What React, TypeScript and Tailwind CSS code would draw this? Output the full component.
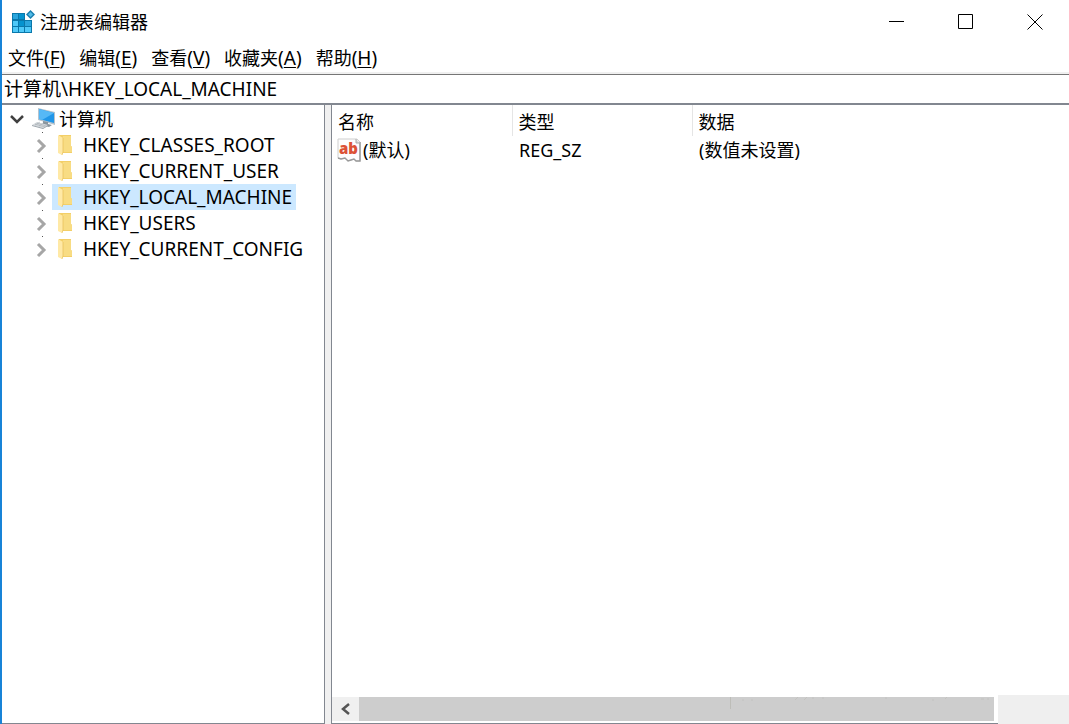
import { useState } from "react";
import type { ReactNode } from "react";

const menus = [
    { label: "文件", key: "F" },
    { label: "编辑", key: "E" },
    { label: "查看", key: "V" },
    { label: "收藏夹", key: "A" },
    { label: "帮助", key: "H" },
];

const hives = [
    "HKEY_CLASSES_ROOT",
    "HKEY_CURRENT_USER",
    "HKEY_LOCAL_MACHINE",
    "HKEY_USERS",
    "HKEY_CURRENT_CONFIG",
];

const values = [{ name: "(默认)", type: "REG_SZ", data: "(数值未设置)" }];

function RegeditIcon() {
    return (
        <svg width="24" height="24" viewBox="0 0 24 24" aria-hidden="true">
            <path d="M1 3h13v7h7v13H1z" fill="#0a78ab" />
            <path d="M2 4h5v5H2zM14 11h6v5h-6z" fill="#2ba6dd" />
            <path d="M8 4h5v5H8zM8 11h5v5H8z" fill="#0593cf" />
            <path d="M2 11h5v5H2zM2 17h5v5H2zM8 17h5v5H8zM14 17h6v5h-6z" fill="#4fc9f8" />
            <path d="M19.500 0L24 4.500 19.500 9 15 4.500z" fill="#187fb0" />
            <path d="M19.500 2L22 4.500 19.500 7 17 4.500z" fill="#52bce8" />
        </svg>
    );
}

function ComputerIcon() {
    return (
        <svg width="24" height="22" viewBox="0 0 24 22" aria-hidden="true">
            <path d="M6 0l17 4v13L6 12z" fill="#b6c3cd" />
            <path d="M7 1l15 4v10L7 11z" fill="#2196e8" />
            <path d="M7 1l15 4-12 7-3-1z" fill="#56b8f6" />
            <path d="M11 13l5 1v2l4 1-3 2-8-2 2-1z" fill="#8a969f" />
            <path d="M0 17l5-3 11 3-5 3z" fill="#d3d8dc" />
            <path d="M0 17l11 3 5-3v1l-5 3L0 18z" fill="#9aa3aa" />
            <path d="M3 16l10 3M5 15l9 3M3 17l5-3M7 18l4-3" stroke="#a9b0b6" strokeWidth=".6" />
        </svg>
    );
}

function FolderIcon() {
    return (
        <svg width="14" height="20" viewBox="0 0 14 20" aria-hidden="true">
            <path d="M1 0h12v11l1 1v6H1z" fill="#f3cf68" />
            <path d="M5 1h8v10l1 1v5H5z" fill="#f8dc83" />
            <path d="M0 0l5 3v14l-1 3-4-2z" fill="#ffe9a6" />
            <path d="M5 3v14l-1 3" fill="none" stroke="#e6bd55" strokeWidth=".7" />
        </svg>
    );
}

function StringIcon() {
    return (
        <svg width="24" height="24" viewBox="0 0 24 24" aria-hidden="true">
            <path d="M1 1h19l3 3v19h-4l-2-2-3 1-3 1-3-3-4 1-3-1z" fill="#fdfdfd" stroke="#cfcfcf" />
            <path d="M23 4v19h-4l-2-2-3 1-3 1-3-3-4 1-3-1" fill="none" stroke="#9a9a9a" strokeWidth="1.500" />
            <path d="M19 1v4h4" fill="#ddd" stroke="#aaa" />
            <text x="2" y="16" fill="#dc5236" fontSize="15" fontWeight="800" fontFamily="'Open Sans', sans-serif">
                ab
            </text>
        </svg>
    );
}

function Caption({ label, children }: { label: string; children: ReactNode }) {
    return (
        <button aria-label={label} className="w-[69px] h-[43px] flex items-center justify-center hover:bg-[#e5e5e5]">
            <svg width="16" height="16" viewBox="0 0 16 16" fill="none" stroke="#000" aria-hidden="true">
                {children}
            </svg>
        </button>
    );
}

export default function App() {
    const [selected, setSelected] = useState("HKEY_LOCAL_MACHINE");

    return (
        <div className="h-screen flex flex-col border-l-2 border-[#1883d7] bg-white text-black text-[18px] leading-[26px] font-['Noto_Sans','Noto_Sans_CJK_SC',sans-serif] overflow-hidden">
            <header className="h-[43px] flex items-center shrink-0">
                <div className="flex-1 flex items-center gap-[5px] pl-[9px]">
                    <RegeditIcon />
                    <h1>注册表编辑器</h1>
                </div>
                <Caption label="最小化">
                    <path d="M0 7.500h15" />
                </Caption>
                <Caption label="最大化">
                    <path d="M.5 .5h14v14H.5z" />
                </Caption>
                <Caption label="关闭">
                    <path d="M.5 .5l15 15M15.500 .5l-15 15" />
                </Caption>
            </header>

            <nav className="h-[31px] flex items-center gap-3.5 pl-1.5 shrink-0 border-b-2 border-[#f0f0f0]">
                {menus.map((m) => (
                    <button key={m.key}>
                        {m.label}
                        <span className="text-[19px]">
                            (<span className="underline underline-offset-2">{m.key}</span>)
                        </span>
                    </button>
                ))}
            </nav>

            <input
                aria-label="地址"
                defaultValue={"计算机\\" + selected}
                key={selected}
                className="h-[29px] w-full px-0.5 pb-0.5 text-[19px] border-t border-[#767676] outline-none shrink-0"
            />

            <main className="flex-1 min-h-0 flex bg-[#f0f0f0] border-t-2 border-[#828790]">
                <aside className="w-[323px] shrink-0 bg-white border-r border-b border-[#828790] pt-px">
                    <div className="h-[26px] flex items-center pl-2">
                        <svg width="14" height="9" viewBox="0 0 14 9" fill="none" stroke="#404040" strokeWidth="2.500" aria-hidden="true">
                            <path d="M1 1l6 6 6-6" />
                        </svg>
                        <button className="flex items-center gap-[3px] pl-2">
                            <ComputerIcon />
                            计算机
                        </button>
                    </div>
                    <ul className="text-[19px]">
                        {hives.map((hive) => (
                            <li key={hive} className="h-[26px] flex pl-[34px]">
                                <svg width="16" height="26" viewBox="0 0 16 26" fill="none" aria-hidden="true">
                                    <path d="M6 0h1v1H6z" fill="#555" />
                                    <path d="M2 8l6 6-6 6" stroke="#a6a6a6" strokeWidth="3" />
                                </svg>
                                <button
                                    onClick={() => setSelected(hive)}
                                    className={
                                        hive === selected
                                            ? "flex items-center gap-[11px] pl-1.5 pr-1 bg-[#cce8ff]"
                                            : "flex items-center gap-[11px] pl-1.5 pr-1"
                                    }
                                >
                                    <FolderIcon />
                                    {hive}
                                </button>
                            </li>
                        ))}
                    </ul>
                </aside>

                <section className="flex-1 min-w-0 ml-1.5 flex flex-col bg-white border-l border-[#828790]">
                    <div className="flex-1">
                        <table className="w-full table-fixed text-left">
                            <thead>
                                <tr className="h-[31px]">
                                    <th className="w-[180px] font-normal pl-1.5 pt-0.5 border-r border-[#e5e5e5]">名称</th>
                                    <th className="w-[180px] font-normal pl-1.5 pt-0.5 border-r border-[#e5e5e5]">类型</th>
                                    <th className="font-normal pl-1.5 pt-0.5">数据</th>
                                </tr>
                            </thead>
                            <tbody>
                                {values.map((v) => (
                                    <tr key={v.name} className="h-[28px]">
                                        <td className="pl-[5px]">
                                            <span className="flex items-center gap-0.5">
                                                <StringIcon />
                                                {v.name}
                                            </span>
                                        </td>
                                        <td className="pl-[7px]">{v.type}</td>
                                        <td className="pl-[7px]">{v.data}</td>
                                    </tr>
                                ))}
                            </tbody>
                        </table>
                    </div>

                    <div className="flex items-end shrink-0">
                        <div className="flex-1 flex h-[27px] pb-0.5 pr-1 border-b border-[#828790]">
                            <button aria-label="向左滚动" className="w-[27px] flex items-center justify-center bg-[#f0f0f0]">
                                <svg width="9" height="12" viewBox="0 0 9 12" fill="none" stroke="#555" strokeWidth="2.500" aria-hidden="true">
                                    <path d="M8 1L2 6l6 5" />
                                </svg>
                            </button>
                            <div className="flex-1 flex justify-end bg-[#cdcdcd]">
                                <svg width="265" height="13" viewBox="0 0 265 13" fill="none" stroke="#bdbdb8" aria-hidden="true">
                                    <path d="M1.500 0v12" />
                                    <path d="M13 3h2M22 3h2M66 3l3-3M75 3l3-3M83 1h2M93 1h2M156 1h2M203 3h2M216 2l2-2M252 2h3M259 1v2" strokeOpacity=".6" />
                                </svg>
                            </div>
                        </div>
                        <div className="w-[71px] h-[29px] bg-[#efefef]" />
                    </div>
                </section>
            </main>
        </div>
    );
}
